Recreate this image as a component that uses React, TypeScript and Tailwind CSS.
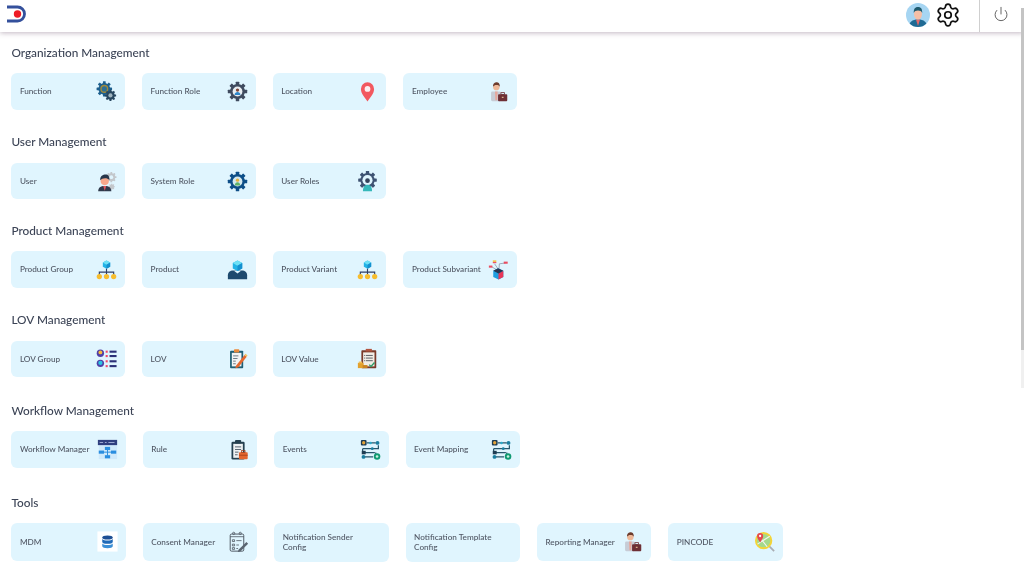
import React from "react";
import { Settings, Power } from "lucide-react";

function Gear({ cx, cy, r, color, teeth = 8 }: { cx: number; cy: number; r: number; color: string; teeth?: number }) {
  const t = r * 0.42;
  return (
    <g>
      {Array.from({ length: teeth }).map((_, i) => (
        <rect
          key={i}
          x={cx - t / 2}
          y={cy - r * 1.18}
          width={t}
          height={r * 0.6}
          rx={t * 0.15}
          fill={color}
          transform={`rotate(${(360 / teeth) * i} ${cx} ${cy})`}
        />
      ))}
      <circle cx={cx} cy={cy} r={r * 0.9} fill={color} />
    </g>
  );
}

const Svg = ({ children }: { children: React.ReactNode }) => (
  <svg viewBox="0 0 24 24" width="21" height="21" className="shrink-0">
    {children}
  </svg>
);

const FunctionIcon = () => (
  <Svg>
    <Gear cx={9.5} cy={9} r={7.5} color="#1d5f8e" />
    <circle cx={9.5} cy={9} r={4.6} fill="#a08a3c" />
    <circle cx={9.5} cy={9} r={3} fill="#2f6f93" />
    <Gear cx={16.5} cy={16.5} r={5.5} color="#27465f" />
    <circle cx={16.5} cy={16.5} r={2.4} fill="#9fb4bf" />
  </Svg>
);
const FunctionRoleIcon = () => (
  <Svg>
    <Gear cx={12} cy={12} r={9.4} color="#3f4b5f" />
    <circle cx={12} cy={12} r={5.6} fill="#e9eef2" />
    <circle cx={12} cy={10.4} r={1.9} fill="#7d4435" />
    <path d="M8.6 16c.3-2.4 1.7-3.4 3.4-3.4s3.1 1 3.4 3.4z" fill="#2e86c9" />
  </Svg>
);
const PinIcon = () => (
  <Svg>
    <path d="M12 23.500C9 18.600 4.500 14.600 4.500 9a7.500 7.500 0 0 1 15 0C19.500 14.600 15 18.600 12 23.500z" fill="#f2585f" />
    <circle cx={12} cy={9} r={3.3} fill="#fdeff0" />
  </Svg>
);
const EmployeeIcon = () => (
  <Svg>
    <rect x={3.5} y={12} width={11} height={11} rx={1.5} fill="#c7ccd6" />
    <path d="M8 12h3l-.5 10h-2z" fill="#e7a79c" />
    <circle cx={9.5} cy={7} r={3.6} fill="#eeb898" />
    <path d="M5.8 6.5C5.5 2.800 8 1.500 10 1.500s3.700 1.500 3.500 5c-1-1.600-2-2-3.800-2-1.700 0-3 .5-3.900 2z" fill="#6d3b2c" />
    <rect x={11.500} y={15} width={10.500} height={8} rx={1} fill="#6e2f35" />
    <rect x={14.800} y={13.300} width={4} height={2} fill="none" stroke="#6e2f35" strokeWidth={0.9} />
    <rect x={15.800} y={18} width={2} height={1.400} fill="#d9b28a" />
  </Svg>
);
const UserIcon = () => (
  <Svg>
    <Gear cx={17.500} cy={7} r={5} color="#c3c7cb" />
    <circle cx={17.500} cy={7} r={2.200} fill="#e0f5fe" />
    <Gear cx={18} cy={18} r={3} color="#c3c7cb" />
    <path d="M2.500 23c0-4 2.500-6 7.500-6s7.500 2 7.500 6z" fill="#2f3a4c" />
    <path d="M8.300 17h3.400L10 22.500z" fill="#e2585e" />
    <circle cx={10} cy={11.500} r={4.700} fill="#f6a88c" />
    <path d="M4.800 10.500C4.500 5.500 8 4 11 4c3 0 4.500 2 4.300 6.500-1.200-1.600-2.800-2.300-5-2.300-2.300 0-4.200.8-5.500 2.300z" fill="#27364a" />
  </Svg>
);
const SystemRoleIcon = () => (
  <Svg>
    <Gear cx={12} cy={12} r={9.400} color="#0e4f88" />
    <circle cx={12} cy={12} r={5.600} fill="#d4e9ef" />
    <circle cx={12} cy={10.500} r={1.900} fill="#e8b23d" />
    <path d="M8.800 16.500c.3-2.600 1.600-3.700 3.200-3.700s2.900 1.100 3.200 3.700z" fill="#5fb36a" />
  </Svg>
);
const UserRolesIcon = () => (
  <Svg>
    <Gear cx={12} cy={10.500} r={9} color="#3e5272" />
    <circle cx={12} cy={10.500} r={5.800} fill="#e0f5fe" />
    <circle cx={12} cy={11} r={2.700} fill="#34425a" />
    <path d="M6.800 23c0-5 2.200-7.300 5.200-7.300s5.200 2.300 5.200 7.300z" fill="#35b8ba" />
  </Svg>
);
const Cube = ({ x, y, s = 1 }: { x: number; y: number; s?: number }) => (
  <g transform={`translate(${x} ${y}) scale(${s})`}>
    <path d="M0-4l4 2.200v4.600L0 5-4 2.800v-4.600z" fill="#22b3e6" />
    <path d="M0-4l4 2.200L0 .5-4-1.800z" fill="#6ee0f5" />
    <path d="M0 .5L4-1.800v4.600L0 5z" fill="#1590cf" />
  </g>
);
const HierarchyIcon = () => (
  <Svg>
    <Cube x={12} y={6} s={1.050} />
    <path d="M12 11v4M3.800 18.500V15h16.400v3.500M12 15v3.500" fill="none" stroke="#2f3f66" strokeWidth={1.300} />
    <circle cx={3.800} cy={20} r={3} fill="#f7bd2e" />
    <circle cx={12} cy={20} r={3} fill="#f7bd2e" />
    <circle cx={20.200} cy={20} r={3} fill="#f7bd2e" />
  </Svg>
);
const ProductIcon = () => (
  <Svg>
    <path d="M1 23v-4.500C1 15 3.500 13 7 13h10c3.500 0 6 2 6 5.500V23z" fill="#1e4a6e" />
    <path d="M12 16.500l-4-3h8z" fill="#e0f5fe" />
    <Cube x={12} y={7} s={1.350} />
  </Svg>
);
const SubvariantIcon = () => (
  <Svg>
    <path d="M12 12L7.500 5.500M12.500 12l.5-6.500 7-1M11 13L4.500 9" fill="none" stroke="#8b97a8" strokeWidth={0.900} />
    <rect x={5.500} y={1.500} width={4} height={2.200} fill="#f2c14e" />
    <rect x={5.500} y={3.500} width={4} height={1.300} fill="#ea4c5f" />
    <rect x={18} y={3} width={4.500} height={2.400} fill="#ea4c5f" />
    <rect x={1} y={7.500} width={4} height={2.400} fill="#ea4c5f" />
    <path d="M11.500 10.500l6 3v7l-5.500 3-6-3v-7z" fill="#1f9ee0" />
    <path d="M17.500 13.500v7l-5.500 3v-7z" fill="#e93557" />
    <path d="M11.500 10.500l6 3-5.500 3-6-3z" fill="#27334f" />
  </Svg>
);
const LovGroupIcon = () => (
  <Svg>
    <circle cx={5} cy={6} r={4.200} fill="#5040a8" />
    <circle cx={5} cy={5} r={2.200} fill="#f6b93b" />
    <circle cx={5} cy={17.500} r={4.200} fill="#5040a8" />
    <circle cx={5} cy={17} r={2.400} fill="#2cc4e0" />
    <rect x={11} y={3} width={2.400} height={2.400} fill="#f14a6b" />
    <rect x={11} y={8} width={2.400} height={2.400} fill="#f14a6b" />
    <rect x={11} y={14} width={2.400} height={2.400} fill="#f14a6b" />
    <rect x={11} y={19.500} width={2.400} height={2.400} fill="#f14a6b" />
    <rect x={15.500} y={3} width={8} height={2.400} fill="#2b2f77" />
    <rect x={15.500} y={8} width={8} height={2.400} fill="#2b2f77" />
    <rect x={15.500} y={14} width={8} height={2.400} fill="#2b2f77" />
    <rect x={15.500} y={19.500} width={8} height={2.400} fill="#2b2f77" />
  </Svg>
);
const LovIcon = () => (
  <Svg>
    <rect x={3.500} y={3} width={15} height={20} rx={1} fill="#1f5f76" />
    <rect x={5.500} y={5.500} width={11} height={15.500} fill="#f2f4f5" />
    <rect x={8} y={1.500} width={6} height={3.500} rx={0.800} fill="#ea8a3c" />
    <path d="M7 9h6M7 12h5M7 15h3M7 18h3" stroke="#5b6b78" strokeWidth={1} />
    <path d="M10.500 20L20 8l2.500 2L13 22l-3.500 1z" fill="#e4682f" />
    <path d="M20 8l1.200-1.500 2.300 2L22.500 10z" fill="#f4c35a" />
  </Svg>
);
const LovValueIcon = () => (
  <Svg>
    <rect x={5} y={2.500} width={17} height={20.500} rx={0.800} fill="#7a3a2a" />
    <rect x={7} y={5} width={13} height={16} fill="#f1ede6" />
    <rect x={10} y={1} width={7} height={3} fill="#b2543f" />
    <path d="M10 8.500h8M10 11.500h8M10 14.500h8" stroke="#4a4f57" strokeWidth={1} />
    <path d="M8 8.500h1M8 11.500h1M8 14.500h1" stroke="#4a4f57" strokeWidth={1} />
    <path d="M14 19l2 2 4-4.500" fill="none" stroke="#2f9c68" strokeWidth={1.600} />
    <rect x={1} y={17} width={6.500} height={6} fill="#e2a12e" />
    <rect x={6.500} y={19.500} width={5.500} height={3.500} fill="#c98420" />
    <rect x={2} y={15.500} width={4} height={2} fill="#f2bf56" />
  </Svg>
);
const WorkflowIcon = () => (
  <Svg>
    <rect x={2} y={2} width={21} height={21} fill="#cfe9fb" />
    <rect x={1} y={1} width={22} height={6} fill="#2f3f7f" />
    <path d="M3 4h4M9 4h2M13 4h7" stroke="#a9b6de" strokeWidth={1} />
    <path d="M12 11v8M6 15h12" stroke="#2a8ee0" strokeWidth={1.100} />
    <rect x={9} y={9} width={6} height={3.600} fill="#2a8ee0" />
    <rect x={2} y={13.200} width={6} height={3.600} fill="#2a8ee0" />
    <rect x={16} y={13.200} width={6} height={3.600} fill="#2a8ee0" />
    <rect x={9} y={18.500} width={6} height={3.600} fill="#2a8ee0" />
  </Svg>
);
const RuleIcon = () => (
  <Svg>
    <rect x={4} y={3} width={15} height={20.500} rx={1.500} fill="#25404f" />
    <rect x={6} y={5.500} width={11} height={16} fill="#eef1f2" />
    <rect x={8} y={1} width={7} height={4} rx={1} fill="#25404f" />
    <path d="M8 9h7M8 12h7M8 15h4M8 18h3" stroke="#56626c" strokeWidth={1.100} />
    <rect x={12.500} y={15} width={10} height={8} rx={1} fill="#e4662e" />
    <rect x={15.500} y={13.300} width={4} height={2} fill="none" stroke="#a6401a" strokeWidth={0.900} />
    <rect x={12.500} y={18} width={10} height={1} fill="#a6401a" />
  </Svg>
);
const EventsIcon = () => (
  <Svg>
    <rect x={1} y={1} width={6.500} height={6.500} rx={1.200} fill="#1f3c52" />
    <circle cx={4.200} cy={4.300} r={1.900} fill="#e3a33a" />
    <circle cx={20} cy={4.500} r={2.200} fill="#1a7ea0" />
    <path d="M7.500 4.500H18M21 7v4H3M3 11v3M3 15.500h14M18 15.500V18M5 20.500h10" fill="none" stroke="#27566b" strokeWidth={1.400} />
    <circle cx={12} cy={4.500} r={1.500} fill="#2aa9c9" />
    <rect x={2} y={13.500} width={4.500} height={4} fill="#1f3c52" />
    <circle cx={14} cy={11} r={1.600} fill="#1a7ea0" />
    <circle cx={4} cy={20.500} r={2.200} fill="#1a7ea0" />
    <circle cx={19.500} cy={20} r={3.700} fill="#0f9a72" />
    <circle cx={19.500} cy={20} r={1.500} fill="#c9f0e0" />
  </Svg>
);
const MdmIcon = () => (
  <Svg>
    <rect x={0.500} y={0.500} width={23} height={23} fill="#ffffff" />
    <ellipse cx={12} cy={7.300} rx={6} ry={2.300} fill="#1d4f94" />
    <path d="M6 9.200c1 1.200 3.500 1.700 6 1.700s5-.5 6-1.700v3.300c0 1.300-2.700 2.200-6 2.200s-6-.9-6-2.200z" fill="#1f6ab8" />
    <path d="M6 14.200c1 1.200 3.500 1.700 6 1.700s5-.5 6-1.700v3.300c0 1.300-2.700 2.200-6 2.200s-6-.9-6-2.200z" fill="#3b8fd6" />
  </Svg>
);
const ConsentIcon = () => (
  <Svg>
    <rect x={2.500} y={3.500} width={15.500} height={19.500} rx={1.500} fill="none" stroke="#4c5560" strokeWidth={1.100} />
    <circle cx={6.500} cy={2.700} r={1.300} fill="none" stroke="#4c5560" strokeWidth={0.900} />
    <circle cx={14} cy={2.700} r={1.300} fill="none" stroke="#4c5560" strokeWidth={0.900} />
    <path d="M2.500 6.500H18M5 10h2.500v2H5zM5 15h2.500v2H5zM5 19h2.500v2H5zM9.500 11h6M9.500 16h3M9.500 20h2" fill="none" stroke="#4c5560" strokeWidth={0.900} />
    <path d="M12 21.500l9-9 2 2-9 9-2.800.6z" fill="#5a6470" />
  </Svg>
);
const PincodeIcon = () => (
  <Svg>
    <path d="M17 17l6 6" stroke="#a9adb3" strokeWidth={2} />
    <circle cx={11} cy={11} r={8.800} fill="#a5d98a" stroke="#f4d437" strokeWidth={2.200} />
    <path d="M4 15L18 6M8 9l7 9" stroke="#f2f5ef" strokeWidth={1.300} />
    <path d="M7 13C5.500 10.500 3.500 8.500 3.500 5.700a3.500 3.500 0 0 1 7 0C10.500 8.500 8.500 10.500 7 13z" fill="#e5484f" />
    <circle cx={7} cy={5.700} r={1.300} fill="#fff" />
  </Svg>
);

type Item = { label: string; icon: React.ReactNode; tall?: boolean };
type Sec = { title: string; wide?: boolean; mb: string; items: Item[] };

const sections: Sec[] = [
  {
    title: "Organization Management",
    mb: "mb-[22.200px]",
    items: [
      { label: "Function", icon: <FunctionIcon /> },
      { label: "Function Role", icon: <FunctionRoleIcon /> },
      { label: "Location", icon: <PinIcon /> },
      { label: "Employee", icon: <EmployeeIcon /> },
    ],
  },
  {
    title: "User Management",
    mb: "mb-[21.100px]",
    items: [
      { label: "User", icon: <UserIcon /> },
      { label: "System Role", icon: <SystemRoleIcon /> },
      { label: "User Roles", icon: <UserRolesIcon /> },
    ],
  },
  {
    title: "Product Management",
    mb: "mb-[22.500px]",
    items: [
      { label: "Product Group", icon: <HierarchyIcon /> },
      { label: "Product", icon: <ProductIcon /> },
      { label: "Product Variant", icon: <HierarchyIcon /> },
      { label: "Product Subvariant", icon: <SubvariantIcon /> },
    ],
  },
  {
    title: "LOV Management",
    mb: "mb-[23.100px]",
    items: [
      { label: "LOV Group", icon: <LovGroupIcon /> },
      { label: "LOV", icon: <LovIcon /> },
      { label: "LOV Value", icon: <LovValueIcon /> },
    ],
  },
  {
    title: "Workflow Management",
    wide: true,
    mb: "mb-[24.500px]",
    items: [
      { label: "Workflow Manager", icon: <WorkflowIcon /> },
      { label: "Rule", icon: <RuleIcon /> },
      { label: "Events", icon: <EventsIcon /> },
      { label: "Event Mapping", icon: <EventsIcon /> },
    ],
  },
  {
    title: "Tools",
    wide: true,
    mb: "mb-0",
    items: [
      { label: "MDM", icon: <MdmIcon /> },
      { label: "Consent Manager", icon: <ConsentIcon /> },
      { label: "Notification Sender Config", icon: null, tall: true },
      { label: "Notification Template Config", icon: null, tall: true },
      { label: "Reporting Manager", icon: <EmployeeIcon /> },
      { label: "PINCODE", icon: <PincodeIcon /> },
    ],
  },
];

function Card({ item, wide }: { item: Item; wide?: boolean }) {
  const size = item.tall ? "h-[38.400px] w-[114.400px]" : wide ? "h-[37.300px] w-[114.400px]" : "h-[36.700px] w-[113.700px]";
  return (
    <div className={`flex items-center justify-between rounded-[6px] bg-[#e0f5fe] pl-[8.500px] pr-[8px] ${size}`}>
      <span className={item.tall ? "max-w-[84px] text-[8.200px] font-medium leading-[10.500px] text-[#4f5663]" : "text-[8.200px] font-medium leading-[10.500px] text-[#4f5663]"}>
        {item.label}
      </span>
      {item.icon}
    </div>
  );
}

export default function App() {
  return (
    <div className="relative h-[568px] w-[1024px] overflow-hidden bg-white font-['Lato','Noto_Sans',sans-serif] blur-[0.35px]">
      <header className="relative z-10 flex h-8 items-center justify-between bg-white pl-[7px] pr-[3px] shadow-[0_1px_5px_rgba(80,50,80,0.35)]">
        <svg viewBox="0 0 20 18" width="20" height="18" className="-mt-[5px]">
          <path d="M0 2h10.500a7 7 0 0 1 0 14H0" fill="none" stroke="#34509c" strokeWidth="2.800" />
          <circle cx="10.500" cy="9" r="3.700" fill="#ee1c25" />
        </svg>
        <div className="flex h-full items-center">
          <svg viewBox="0 0 24 24" width="24" height="24" className="-mt-[3px] mr-[5px]">
            <defs>
              <clipPath id="av">
                <circle cx="12" cy="12" r="12" />
              </clipPath>
            </defs>
            <g clipPath="url(#av)">
              <rect width="24" height="24" fill="#a6d5f2" />
              <path d="M3 24c0-5 3-7.500 9-7.500s9 2.500 9 7.500z" fill="#1f6a94" />
              <path d="M10 16.500h4L12 23z" fill="#e26a6a" />
              <ellipse cx="12" cy="11" rx="4" ry="5.500" fill="#f5bfa6" />
              <path d="M7.800 10C7.500 5.500 9.500 4 12 4s4.500 1.500 4.200 6c-.8-1.800-2-2.500-4.200-2.500S8.600 8.200 7.800 10z" fill="#1f5a6e" />
            </g>
          </svg>
          <Settings size={26} strokeWidth={1.6} color="#111" className="-mt-[3px] mr-[18px]" />
          <div className="flex h-full w-[42px] items-center justify-center border-l border-[#cfcfcf]">
            <Power size={16} strokeWidth={1.5} color="#666" className="-mt-[5px]" />
          </div>
        </div>
      </header>

      <main className="pl-[11.400px] pt-[10.800px]">
        {sections.map((s) => (
          <section key={s.title} className={s.mb}>
            <h2 className="mb-[10.500px] flex h-5 items-center text-[11.800px] font-medium text-[#3c4456]">{s.title}</h2>
            <div className="flex items-start gap-[17px]">
              {s.items.map((it) => (
                <Card key={it.label} item={it} wide={s.wide} />
              ))}
            </div>
          </section>
        ))}
      </main>

      <div className="absolute right-0 top-[8px] z-20 h-[380px] w-[3px] bg-[#f0f0f0]">
        <div className="h-[342px] w-full bg-[#c4c4c4]" />
      </div>
    </div>
  );
}
